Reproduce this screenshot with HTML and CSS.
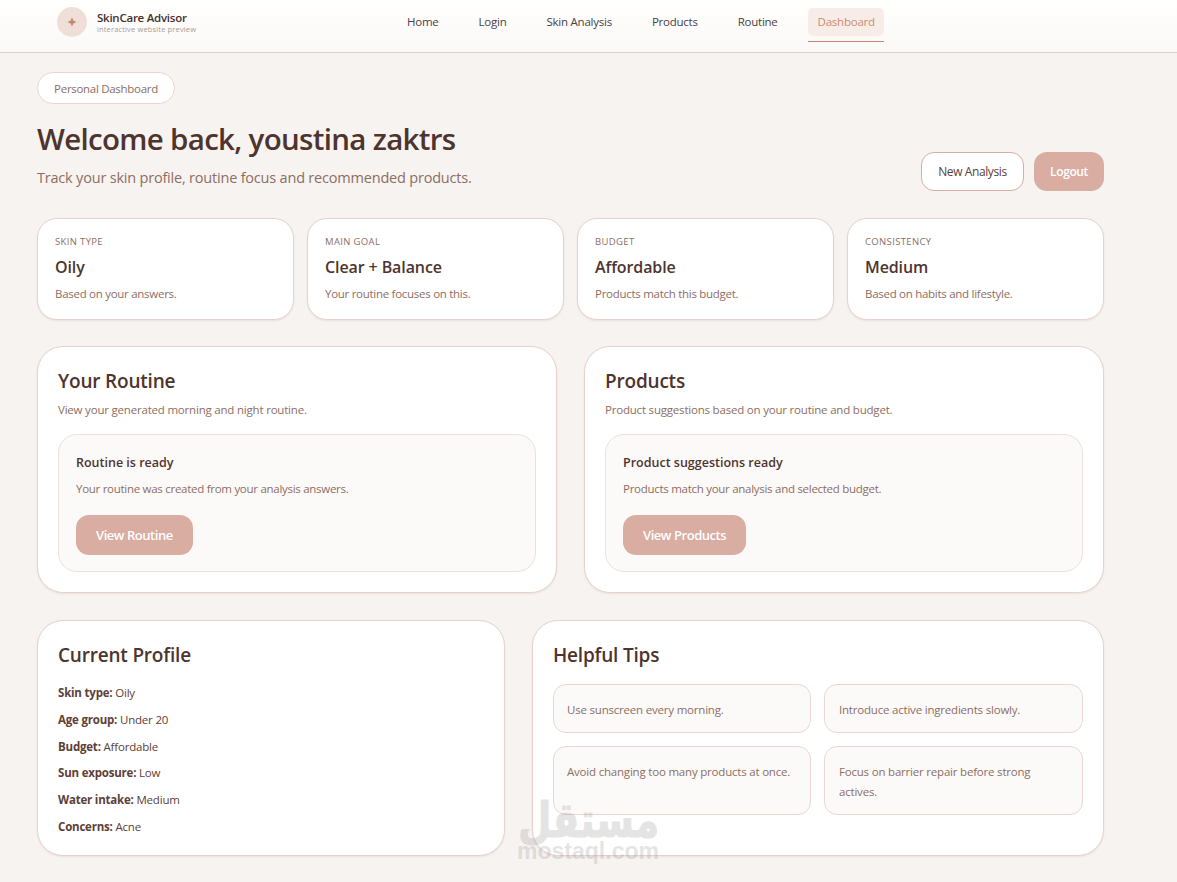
FILE: index.html
```
<!DOCTYPE html>
<html lang="en">
<head>
<meta charset="utf-8">
<title>SkinCare Advisor - Dashboard</title>
<link rel="stylesheet" href="styles.css">
</head>
<body>
<header class="site-header">
	<div class="brand">
		<div class="brand-logo">
			<svg width="10" height="10" viewBox="0 0 10 10"><path d="M5 0.5L6.4 3.6L9.5 5L6.4 6.4L5 9.5L3.6 6.4L0.5 5L3.6 3.6Z" fill="#c58a6d"/></svg>
		</div>
		<div>
			<div class="brand-name">SkinCare Advisor</div>
			<div class="brand-sub">interactive website preview</div>
		</div>
	</div>
	<nav class="nav">
		<a class="nav-link">Home</a>
		<a class="nav-link">Login</a>
		<a class="nav-link">Skin Analysis</a>
		<a class="nav-link">Products</a>
		<a class="nav-link">Routine</a>
		<a class="nav-link active">Dashboard</a>
	</nav>
</header>
<main class="page">
	<section class="hero">
		<div>
			<span class="pill">Personal Dashboard</span>
			<h1>Welcome back, youstina zaktrs</h1>
			<p class="hero-text">Track your skin profile, routine focus and recommended products.</p>
		</div>
		<div class="hero-actions">
			<button class="btn-outline">New Analysis</button>
			<button class="btn-small">Logout</button>
		</div>
	</section>

	<section class="stats">
		<div class="stat">
			<div class="stat-label">SKIN TYPE</div>
			<div class="stat-value">Oily</div>
			<p>Based on your answers.</p>
		</div>
		<div class="stat">
			<div class="stat-label">MAIN GOAL</div>
			<div class="stat-value">Clear + Balance</div>
			<p>Your routine focuses on this.</p>
		</div>
		<div class="stat">
			<div class="stat-label">BUDGET</div>
			<div class="stat-value">Affordable</div>
			<p>Products match this budget.</p>
		</div>
		<div class="stat">
			<div class="stat-label">CONSISTENCY</div>
			<div class="stat-value">Medium</div>
			<p>Based on habits and lifestyle.</p>
		</div>
	</section>

	<section class="panels">
		<div class="panel">
			<h2>Your Routine</h2>
			<p>View your generated morning and night routine.</p>
			<div class="ready">
				<h3>Routine is ready</h3>
				<p>Your routine was created from your analysis answers.</p>
				<button class="btn">View Routine</button>
			</div>
		</div>
		<div class="panel">
			<h2>Products</h2>
			<p>Product suggestions based on your routine and budget.</p>
			<div class="ready">
				<h3>Product suggestions ready</h3>
				<p>Products match your analysis and selected budget.</p>
				<button class="btn">View Products</button>
			</div>
		</div>
	</section>

	<section class="bottom">
		<div class="panel">
			<h2>Current Profile</h2>
			<ul class="profile">
				<li><b>Skin type:</b> Oily</li>
				<li><b>Age group:</b> Under 20</li>
				<li><b>Budget:</b> Affordable</li>
				<li><b>Sun exposure:</b> Low</li>
				<li><b>Water intake:</b> Medium</li>
				<li><b>Concerns:</b> Acne</li>
			</ul>
		</div>
		<div class="panel">
			<h2>Helpful Tips</h2>
			<div class="tips">
				<div class="tip">Use sunscreen every morning.</div>
				<div class="tip">Introduce active ingredients slowly.</div>
				<div class="tip">Avoid changing too many products at once.</div>
				<div class="tip">Focus on barrier repair before strong actives.</div>
			</div>
		</div>
	</section>
</main>
<svg class="watermark" width="146" height="76" viewBox="0 0 146 76">
	<text class="wm-ar" transform="translate(73.5 42) scale(1 1.22)" text-anchor="middle" textLength="141" lengthAdjust="spacingAndGlyphs">مستقل</text>
	<text class="wm-en" x="2" y="64" textLength="142" lengthAdjust="spacingAndGlyphs">mostaql.com</text>
</svg>
</body>
</html>
```

FILE: styles.css
```
*{box-sizing:border-box;}
body{margin:0;height:882px;overflow:hidden;background:#f7f3f0;color:#4e342e;font:12px/20px "Open Sans","Noto Sans",sans-serif;}
h1,h2,h3,p,ul{margin:0;padding:0;}
button{font-family:inherit;padding:0;}

/* header */
.site-header{display:flex;height:53px;padding:7px 0 0 57px;background:linear-gradient(#fffffe,#fbf9f7);border-bottom:1px solid #ddcfca;}
.brand{display:flex;width:340px;height:30px;gap:10px;}
.brand-logo{display:flex;width:30px;height:30px;align-items:center;justify-content:center;border-radius:50%;background:#f0ded8;}
.brand-name{padding-top:4px;font-size:11.5px;line-height:14px;font-weight:600;letter-spacing:-0.25px;color:#43302f;}
.brand-sub{font-size:7.5px;line-height:9px;color:#a39c99;letter-spacing:0.15px;}
.nav{display:flex;gap:20px;padding-top:1px;}
.nav-link{height:28px;padding:0 10px;line-height:28px;font-size:11.5px;letter-spacing:-0.24px;color:#4a3f45;}
.nav-link.active{position:relative;width:76px;color:#c98d76;background:#f8ece8;border-radius:5px;}
.nav-link.active:after{content:"";position:absolute;left:0;right:0;bottom:-6px;height:1px;background:#c58a6d;}

/* hero */
.page{width:1104px;padding:19px 0 0 37px;}
.hero{display:flex;justify-content:space-between;align-items:flex-end;height:119px;}
.pill{display:block;width:138px;height:32px;line-height:31px;text-align:center;background:#fff;border:1px solid #ead7d1;border-radius:16px;color:#8d6e63;font-size:11.5px;letter-spacing:-0.3px;}
h1{margin-top:15px;font-size:29.5px;line-height:40px;font-weight:600;letter-spacing:-0.69px;}
.hero-text{margin-top:7px;height:25px;font-size:14.5px;line-height:24px;color:#8d6e63;letter-spacing:-0.2px;}
.hero-actions{display:flex;gap:10px;}
.btn-outline{width:103px;height:39px;background:#fff;border:1px solid #d9ada2;border-radius:13px;color:#5d4037;font-size:12px;letter-spacing:-0.4px;}
.btn-small{width:70px;height:39px;background:#d9ada2;border:0;border-radius:13px;color:#fff;font-size:12px;font-weight:600;letter-spacing:-0.4px;}

/* stats */
.stats{display:grid;grid-template-columns:repeat(4,1fr);gap:13px;margin-top:27px;}
.stat{height:102px;padding:14px 17px;background:#fff;border:1px solid #e6d3cd;border-radius:20px;box-shadow:0 1px 2px rgba(141,110,99,.12);}
.stat-label{font-size:9.5px;line-height:17px;color:#8d6e63;letter-spacing:0.35px;}
.stat-value{margin-top:5px;font-size:16px;line-height:24px;font-weight:600;letter-spacing:-0.1px;}
.stat p{margin-top:5px;}
.stat p,.panel p,.tip{font-size:11.5px;color:#8d6e63;letter-spacing:-0.28px;}

/* panels */
.panels,.bottom{display:grid;grid-template-columns:1fr 1fr;gap:27px;margin-top:26px;}
.panel{height:247px;padding:20px;background:#fff;border:1px solid #e6d3cd;border-radius:26px;box-shadow:0 1px 2px rgba(141,110,99,.12);}
.panel h2{font-size:19px;line-height:28px;font-weight:600;letter-spacing:-0.2px;}
.panel > p{margin-top:5px;letter-spacing:-0.2px;}
.ready{height:138px;margin-top:14px;padding:18px 17px 0;background:#fcfaf9;border:1px solid #eee0db;border-radius:19px;}
.ready h3{font-size:12.5px;line-height:20px;font-weight:600;letter-spacing:0;}
.ready p{margin-top:6px;}
.btn{height:40px;margin-top:16px;padding:0 20px;background:#d9ada2;border:0;border-radius:13px;color:#fff;font-size:13px;font-weight:600;letter-spacing:-0.45px;}

/* profile and tips */
.bottom{grid-template-columns:468px 1fr;margin-top:27px;}
.bottom .panel{height:236px;}
.profile{margin-top:11px;list-style:none;font-size:11.5px;line-height:26.75px;color:#5d4037;letter-spacing:-0.2px;}
.tips{display:grid;grid-template-columns:258px 1fr;grid-template-rows:49px 69px;gap:13px;margin-top:15px;}
.tip{padding:15px 17px 0 14px;background:#fcfaf9;border:1px solid #ead7d1;border-radius:13px;letter-spacing:-0.2px;}
.tip:nth-child(odd){padding-left:13px;padding-right:13px;}

.watermark{position:absolute;left:515px;top:795px;overflow:visible;opacity:.22;}
.wm-ar{font:bold 40px "DejaVu Sans",sans-serif;fill:#8a8a8a;stroke:#8a8a8a;stroke-width:1;stroke-linejoin:round;}
.wm-en{font:bold 23px "Liberation Sans",Arial,sans-serif;fill:#8a8a8a;}
```
